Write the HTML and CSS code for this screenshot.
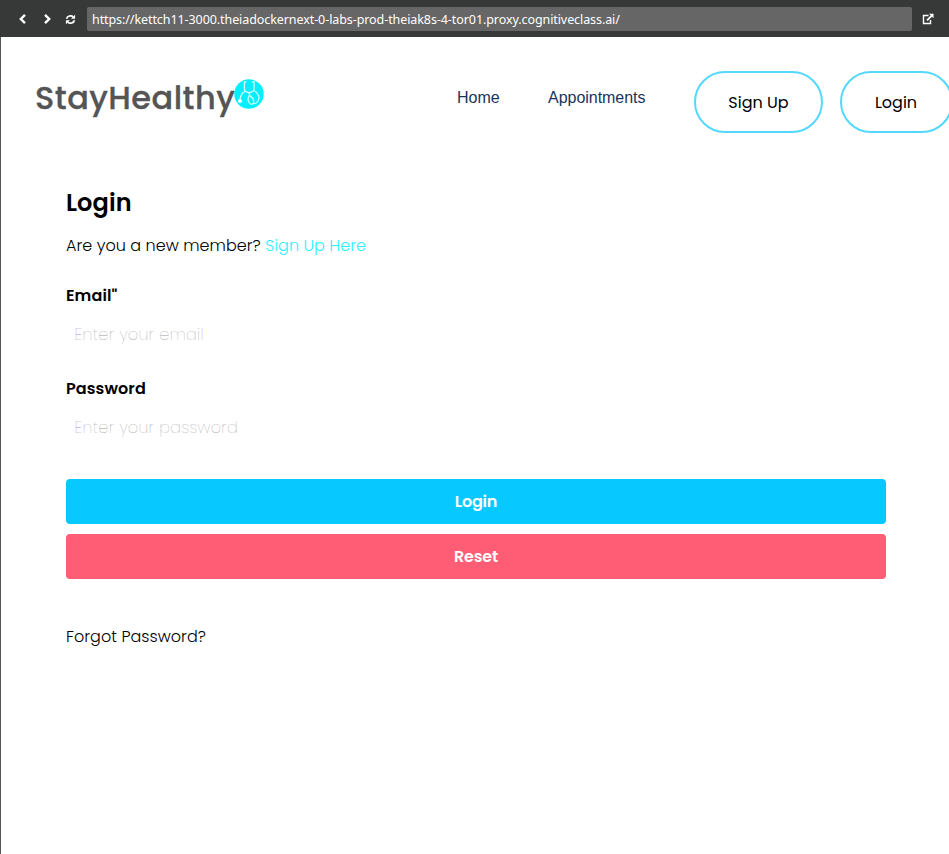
FILE: index.html
```html
<!DOCTYPE html>
<html lang="en">
<head>
<meta charset="utf-8">
<title>StayHealthy</title>
<link rel="stylesheet" href="styles.css">
</head>
<body>
<div class="toolbar">
  <svg class="tool back" viewBox="0 0 12 12"><path d="M8 1.8 3.8 6 8 10.2"/></svg>
  <svg class="tool forward" viewBox="0 0 12 12"><path d="M4 1.8 8.2 6 4 10.2"/></svg>
  <svg class="tool refresh" viewBox="0 0 12 12"><path d="M1.8 5.2A4.2 3.7 0 0 1 9 3.2M10.2 6.8A4.2 3.7 0 0 1 3 8.8"/><path class="fill" d="M11 .8v4.4H6.6zM1 11.2V6.8h4.4z"/></svg>
  <div class="address"><span>https://kettch11-3000.theiadockernext-0-labs-prod-theiak8s-4-tor01.proxy.cognitiveclass.ai/</span></div>
  <svg class="tool external" viewBox="0 0 12 12"><path d="M6.5 2.5H1.5v8h7V7"/><path class="shaft" d="M5 7.3 9.5 2.8"/><path class="fill" d="M7 .7h4.5v4.5z"/></svg>
</div>
<div class="page">
  <nav class="nav">
    <a class="brand"><span class="brand-name">StayHealthy</span><svg class="brand-icon" viewBox="0 0 30 30"><circle cx="15" cy="15" r="14.7" fill="#00f0ff"/><g fill="none" stroke="#d8fdff" stroke-width="1.3"><path d="M12.6 2.8H10.4v7q0 3.4 4.7 3.8 4.9-.4 4.9-3.8v-7h-2.2M11 12.2Q6 15 6 22M15.2 13.5Q15 17 18 18.5q2.5 2.5 1.4 5.5-1.4 2.2-3.4.6-3.5-3.5-.8-8M20 11.5c4.6 2.5 6 7 4 10.5-1.2 2.2-3 3-4.8 2.2"/></g><circle cx="6" cy="22" r="2.1" fill="#fff"/></svg></a>
    <a class="link home">Home</a>
    <a class="link appointments">Appointments</a>
    <button class="pill signup"><span>Sign Up</span></button>
    <button class="pill login"><span>Login</span></button>
  </nav>
  <main class="form">
    <h1><span>Login</span></h1>
    <p class="intro"><span class="question">Are you a new member?</span> <a>Sign Up Here</a></p>
    <label class="label email"><span>Email"</span></label>
    <div class="field"><span class="hint hint-email">Enter your email</span></div>
    <label class="label password"><span>Password</span></label>
    <div class="field"><span class="hint hint-password">Enter your password</span></div>
    <button class="action primary"><span>Login</span></button>
    <button class="action danger"><span>Reset</span></button>
    <p class="forgot"><span>Forgot Password?</span></p>
  </main>
</div>
</body>
</html>
```
FILE: styles.css
```css
* { box-sizing: border-box; }
body {
  margin: 0;
  height: 854px;
  overflow: hidden;
  background: #fff;
  color: #000;
  font: 16px/24px Poppins, Inter, sans-serif;
}
h1, p { margin: 0; }
button { font: inherit; color: inherit; padding: 0; }
.toolbar {
  height: 37px;
  display: flex;
  align-items: center;
  padding-left: 17px;
  background: #373938;
}
.tool { flex: none; width: 12px; height: 12px; fill: none; stroke: #fff; stroke-width: 2.4; }
.tool .fill { fill: #fff; stroke: none; }
.tool .shaft { stroke-width: 1.8; }
.back { margin-top: 1px; }
.forward { margin: 1px 0 0 12px; }
.refresh { width: 11px; height: 11px; margin: 2px 11px 0 12px; stroke-width: 1.9; }
.address {
  width: 825px;
  height: 24px;
  margin-top: 1px;
  padding-left: 5px;
  border-radius: 2px;
  background: #666;
  color: #fff;
  font: 12.5px/25px "Noto Sans", "Open Sans", sans-serif;
  letter-spacing: -0.08px;
  white-space: nowrap;
}
.external { margin: 1px 0 0 10px; stroke-width: 1.4; }
.page { height: 817px; border-left: 1px solid #555; overflow: hidden; }
.nav { width: 980px; height: 134px; padding: 34px 0 0 35px; display: flex; align-items: flex-start; white-space: nowrap; }
.brand { display: flex; width: 421px; }
.brand-name { width: 198px; margin-left: -1px; margin-right: 1px; font-size: 32px; line-height: 54px; font-weight: 500; letter-spacing: 0.45px; color: #555; -webkit-text-stroke: 0.3px #555; }
.brand-icon { width: 30px; height: 30px; margin-top: 8px; }
.link { font: 16px/54px "Liberation Sans", Arial, sans-serif; color: #17345e; }
.home { width: 91px; }
.appointments { width: 146px; letter-spacing: -0.03px; }
.pill { height: 62px; padding-top: 2px; border: 2px solid #55d8ff; border-radius: 31px; background: #fff; flex: none; }
.signup { width: 129px; }
.login { width: 113px; margin-left: 17px; padding-right: 1px; }
.form { width: 820px; margin-left: 65px; display: flex; flex-direction: column; white-space: nowrap; }
h1 { height: 63px; font-size: 24px; line-height: 64px; font-weight: 600; letter-spacing: 0.1px; }
.intro { height: 50px; font-weight: 300; line-height: 24px; letter-spacing: 0.03px; }
.intro a { color: #2eefff; }
.label { height: 24px; font-weight: 600; letter-spacing: 0.1px; }
.field { height: 69px; padding: 15px 0 0 8.5px; font-weight: 200; color: #999; letter-spacing: 0.32px; }
.action { height: 45px; border: 0; border-radius: 4px; color: #fff; font-weight: 600; letter-spacing: -0.2px; }
.primary { margin-top: 9px; background: #08c9ff; }
.danger { margin-top: 10px; background: #ff5c75; }
.forgot { margin-top: 46px; font-weight: 300; letter-spacing: 0.04px; }
```
